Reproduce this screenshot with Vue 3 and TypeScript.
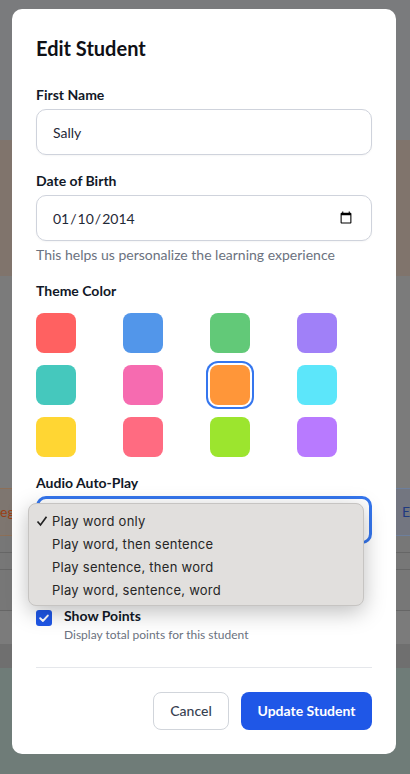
<script setup lang="ts">
const swatches: string[] = [
  '#ff6161', '#5296ea', '#62c978', '#a080f8',
  '#45c8bd', '#f66bb0', '#ff9639', '#5ce6fa',
  '#ffd633', '#ff6b81', '#9ce52e', '#b87aff',
]
const selected = 6
const options: string[] = [
  'Play word only',
  'Play word, then sentence',
  'Play sentence, then word',
  'Play word, sentence, word',
]
</script>

<template>
  <div class="page">
    <div class="backdrop">
      <div class="band b-top"></div>
      <div class="band b-tan"></div>
      <div class="band b-gray"></div>
      <div class="band b-row">
        <div class="cell cell-left">eg</div>
        <div class="cell cell-right">E</div>
      </div>
      <div class="band b-line h17"></div>
      <div class="band b-line h17"></div>
      <div class="band b-line h41"></div>
      <div class="band b-line h33"></div>
      <div class="band b-dark"></div>
      <div class="band b-teal"></div>
    </div>

    <div class="modal">
      <h2 class="title">Edit Student</h2>

      <label class="label first">First Name</label>
      <input class="input" type="text" value="Sally" />

      <label class="label second">Date of Birth</label>
      <input class="input date" type="date" value="2014-01-10" />
      <p class="hint">This helps us personalize the learning experience</p>

      <div class="label third">Theme Color</div>
      <div class="swatches">
        <div
          v-for="(c, i) in swatches"
          :key="i"
          class="swatch"
          :class="{ selected: i === selected }"
          :style="{ background: c }"
        ></div>
      </div>

      <div class="label fourth">Audio Auto-Play</div>
      <div class="select">
        <ul class="menu">
          <li v-for="(o, i) in options" :key="o" class="option">
            <svg v-if="i === 0" class="tick" viewBox="0 0 12 12" width="12" height="12">
              <path d="M1.5 6.5 L4.5 10 L10.5 1.8" fill="none" stroke="#222" stroke-width="1.7" />
            </svg>
            <span>{{ o }}</span>
          </li>
        </ul>
      </div>

      <div class="check-row">
        <span class="checkbox">
          <svg viewBox="0 0 16 16" width="16" height="16">
            <path d="M4.2 8.3 L7 10.9 L11.8 5.6" fill="none" stroke="#fff" stroke-width="2" stroke-linecap="round" stroke-linejoin="round" />
          </svg>
        </span>
        <div class="check-text">
          <div class="check-title">Show Points</div>
          <div class="check-sub">Display total points for this student</div>
        </div>
      </div>

      <div class="actions">
        <button class="btn cancel" type="button">Cancel</button>
        <button class="btn primary" type="button">Update Student</button>
      </div>
    </div>
  </div>
</template>

<style>
html, body { margin: 0; padding: 0; overflow: hidden; }
</style>

<style scoped>
.page {
  position: relative;
  width: 410px;
  height: 774px;
  overflow: hidden;
  font-family: Lato, "Liberation Sans", sans-serif;
}
.backdrop { display: flex; flex-direction: column; height: 774px; }
.band { flex: none; box-sizing: border-box; }
.b-top { height: 140px; background: #7a7b7d; }
.b-tan { height: 136px; background: #80746c; }
.b-gray { height: 212px; background: #7b7b7b; }
.b-row {
  height: 48px;
  display: flex;
  justify-content: space-between;
  background: #787878;
}
.cell {
  width: 30px;
  box-sizing: border-box;
  font-size: 14px;
  line-height: 46px;
  border-top: 1px solid;
  border-bottom: 1px solid;
}
.cell-left {
  color: #9a3f14;
  text-align: right;
  padding-right: 19px;
  background: #7e7670;
  border-color: #8d6f57;
}
.cell-right {
  color: #1f3a80;
  padding-left: 22px;
  background: #737680;
  border-color: #6d7f9c;
}
.b-line { background: #777; border-bottom: 1px solid #666; }
.h17 { height: 17px; }
.h41 { height: 41px; }
.h33 { height: 33px; background: #7b7b7b; border-bottom: none; }
.b-dark { height: 24px; background: #6f6f6f; }
.b-teal { flex: 1; background: #6f7c78; }

.modal {
  position: absolute;
  left: 12px;
  top: 9px;
  width: 384px;
  height: 745px;
  box-sizing: border-box;
  background: #fff;
  border-radius: 10px;
  padding: 24px;
  display: flex;
  flex-direction: column;
  color: #111827;
}
.title {
  margin: 0;
  font-size: 20px;
  line-height: 30px;
  font-weight: 700;
  color: #0f1015;
}
.label {
  display: block;
  font-size: 14px;
  line-height: 20px;
  font-weight: 700;
  color: #111827;
}
.first { margin-top: 22px; margin-bottom: 4px; }
.second { margin-top: 16px; margin-bottom: 4px; }
.third { margin-top: 16px; margin-bottom: 12px; }
.fourth { margin-top: 16px; margin-bottom: 3px; }
.input {
  box-sizing: border-box;
  width: 336px;
  height: 46px;
  border: 1px solid #cfd3dc;
  border-radius: 10px;
  padding: 0 16px;
  background: #fff;
  font-family: Lato, "Liberation Sans", sans-serif;
  font-size: 14px;
  color: #1f2937;
  outline: none;
  box-shadow: 0 1px 2px rgba(0, 0, 0, 0.04);
}
.date { padding-left: 15px; }
.hint {
  margin: 4px 0 0;
  font-size: 14px;
  line-height: 20px;
  color: #6b7280;
}
.swatches {
  display: grid;
  grid-template-columns: repeat(4, 75px);
  column-gap: 12px;
  row-gap: 12px;
}
.swatch { width: 40px; height: 40px; border-radius: 8px; }
.swatch.selected { box-shadow: 0 0 0 2px #fff, 0 0 0 4px #3576ee; }
.select {
  position: relative;
  box-sizing: border-box;
  width: 336px;
  height: 48px;
  border: 3px solid #3576ee;
  border-radius: 10px;
  background: #fff;
}
.menu {
  position: absolute;
  left: -11px;
  top: 4px;
  width: 336px;
  height: 103px;
  box-sizing: border-box;
  margin: 0;
  padding: 6px 0;
  list-style: none;
  background: #e1dfdd;
  border: 1px solid #c6c4c2;
  border-radius: 8px;
  box-shadow: 0 6px 22px rgba(0, 0, 0, 0.26);
  font-family: Inter, "Liberation Sans", sans-serif;
  font-size: 13px;
  color: #262626;
  z-index: 2;
}
.option {
  position: relative;
  height: 23px;
  line-height: 23px;
  padding-left: 23px;
  letter-spacing: 0.26px;
}
.tick { position: absolute; left: 7px; top: 5px; }
.check-row {
  display: flex;
  align-items: flex-start;
  gap: 12px;
  margin-top: 63px;
}
.checkbox {
  flex: none;
  width: 16px;
  height: 16px;
  margin-top: 3px;
  border-radius: 3px;
  background: #1f57e7;
  display: block;
}
.checkbox svg { display: block; }
.check-title {
  font-size: 14px;
  line-height: 20px;
  font-weight: 700;
  color: #111827;
  margin-top: -1px;
}
.check-sub {
  font-size: 12px;
  line-height: 16px;
  margin-top: 1px;
  color: #6b7280;
}
.actions {
  margin-top: 24px;
  padding-top: 24px;
  border-top: 1px solid #e5e7eb;
  display: flex;
  justify-content: flex-end;
  gap: 12px;
}
.btn {
  height: 38px;
  box-sizing: border-box;
  border-radius: 8px;
  font-family: Lato, "Liberation Sans", sans-serif;
  font-size: 14px;
  line-height: 20px;
}
.cancel {
  width: 76px;
  background: #fff;
  border: 1px solid #d1d5db;
  color: #374151;
  font-weight: 500;
}
.primary {
  width: 131px;
  background: #1f57e7;
  border: none;
  color: #fff;
  font-weight: 700;
}
</style>
